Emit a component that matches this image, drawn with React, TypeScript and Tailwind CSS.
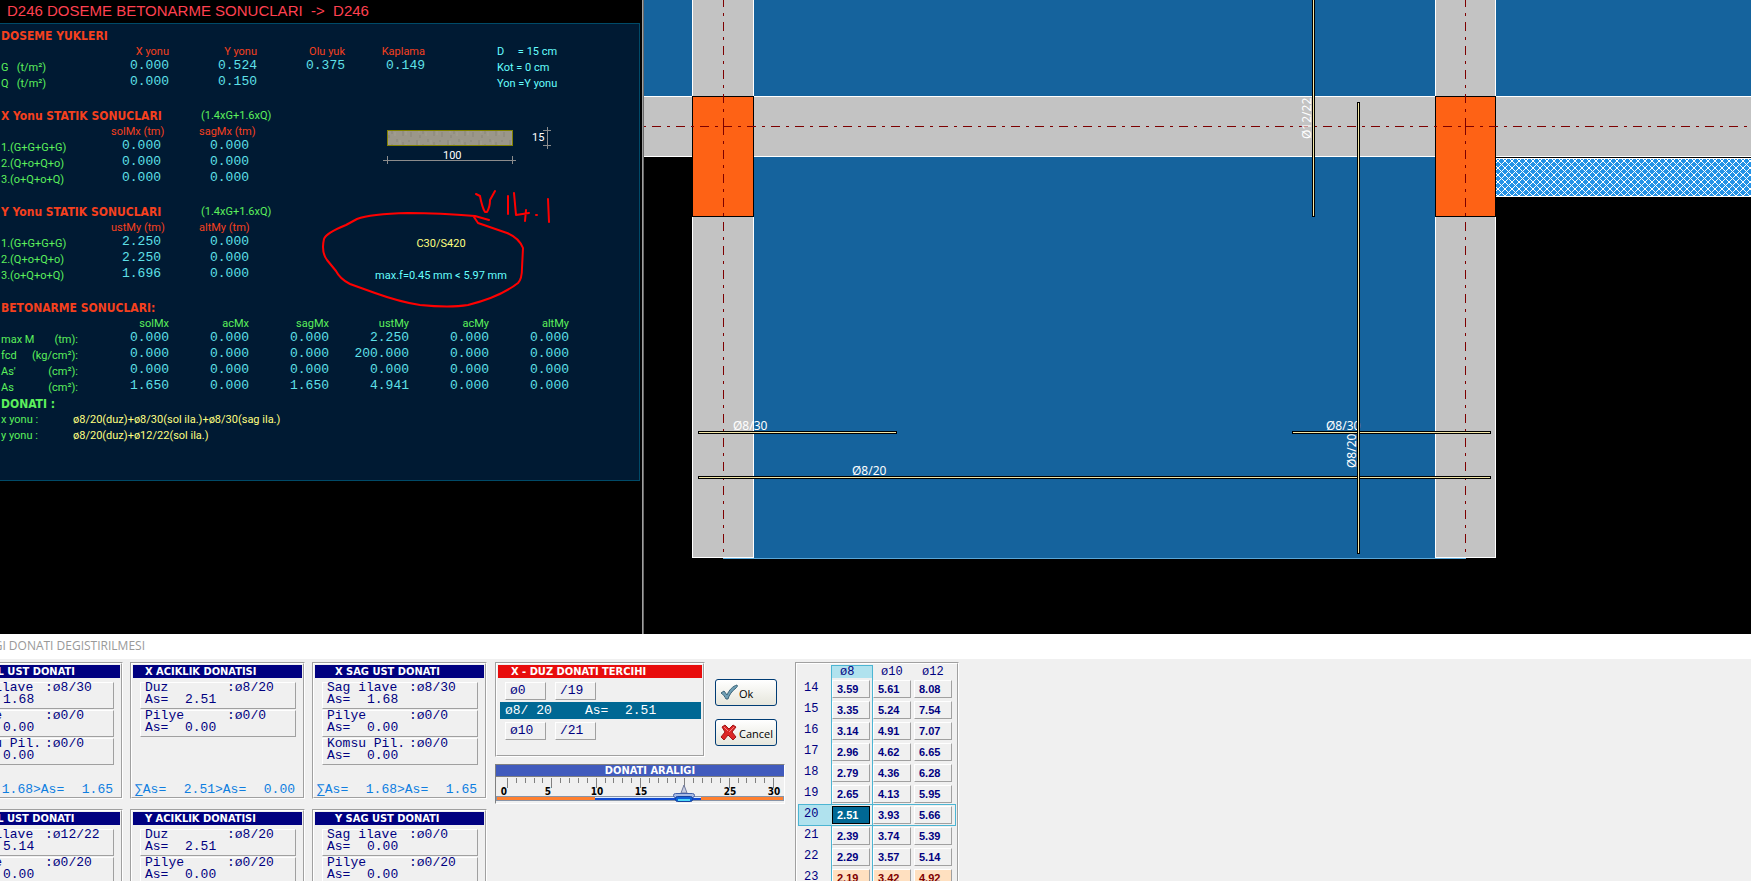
import { useState, type ReactNode } from 'react';

const LOADS = [
  { name: 'G', values: ['0.000', '0.524', '0.375', '0.149'] },
  { name: 'Q', values: ['0.000', '0.150'] },
];

const STATICS = [
  {
    title: 'X Yonu STATIK SONUCLARI',
    heads: ['solMx (tm)', 'sagMx (tm)'],
    values: [['0.000', '0.000'], ['0.000', '0.000'], ['0.000', '0.000']],
  },
  {
    title: 'Y Yonu STATIK SONUCLARI',
    heads: ['ustMy (tm)', 'altMy (tm)'],
    values: [['2.250', '0.000'], ['2.250', '0.000'], ['1.696', '0.000']],
  },
];

const CASES = ['1.(G+G+G+G)', '2.(Q+o+Q+o)', '3.(o+Q+o+Q)'];

const CONCRETE = [
  { name: 'max M', unit: '(tm):', values: ['0.000', '0.000', '0.000', '2.250', '0.000', '0.000'] },
  { name: 'fcd', unit: '(kg/cm²):', values: ['0.000', '0.000', '0.000', '200.000', '0.000', '0.000'] },
  { name: "As'", unit: '(cm²):', values: ['0.000', '0.000', '0.000', '0.000', '0.000', '0.000'] },
  { name: 'As', unit: '(cm²):', values: ['1.650', '0.000', '1.650', '4.941', '0.000', '0.000'] },
];

type RebarGroup = {
  title: string;
  indent: string;
  items: { name: string; bar: string; area: string }[];
  sum: string[];
};

const GROUPS: RebarGroup[][] = [
  [
    {
      title: 'X SOL UST DONATI',
      indent: 'pl-[20px]',
      items: [
        { name: 'Sol ilave', bar: 'ø8/30', area: '1.68' },
        { name: 'Pilye', bar: 'ø0/0', area: '0.00' },
        { name: 'Komsu Pil.', bar: 'ø0/0', area: '0.00' },
      ],
      sum: ['1.68', '1.65'],
    },
    {
      title: 'X ACIKLIK DONATISI',
      indent: 'pl-[12px]',
      items: [
        { name: 'Duz', bar: 'ø8/20', area: '2.51' },
        { name: 'Pilye', bar: 'ø0/0', area: '0.00' },
      ],
      sum: ['2.51', '0.00'],
    },
    {
      title: 'X SAG UST DONATI',
      indent: 'pl-[20px]',
      items: [
        { name: 'Sag ilave', bar: 'ø8/30', area: '1.68' },
        { name: 'Pilye', bar: 'ø0/0', area: '0.00' },
        { name: 'Komsu Pil.', bar: 'ø0/0', area: '0.00' },
      ],
      sum: ['1.68', '1.65'],
    },
  ],
  [
    {
      title: 'Y SOL UST DONATI',
      indent: 'pl-[20px]',
      items: [
        { name: 'Sol ilave', bar: 'ø12/22', area: '5.14' },
        { name: 'Pilye', bar: 'ø0/20', area: '0.00' },
      ],
      sum: [],
    },
    {
      title: 'Y ACIKLIK DONATISI',
      indent: 'pl-[12px]',
      items: [
        { name: 'Duz', bar: 'ø8/20', area: '2.51' },
        { name: 'Pilye', bar: 'ø0/20', area: '0.00' },
      ],
      sum: [],
    },
    {
      title: 'Y SAG UST DONATI',
      indent: 'pl-[20px]',
      items: [
        { name: 'Sag ilave', bar: 'ø0/0', area: '0.00' },
        { name: 'Pilye', bar: 'ø0/20', area: '0.00' },
      ],
      sum: [],
    },
  ],
];

const AREAS: [number, string[]][] = [
  [14, ['3.59', '5.61', '8.08']],
  [15, ['3.35', '5.24', '7.54']],
  [16, ['3.14', '4.91', '7.07']],
  [17, ['2.96', '4.62', '6.65']],
  [18, ['2.79', '4.36', '6.28']],
  [19, ['2.65', '4.13', '5.95']],
  [20, ['2.51', '3.93', '5.66']],
  [21, ['2.39', '3.74', '5.39']],
  [22, ['2.29', '3.57', '5.14']],
  [23, ['2.19', '3.42', '4.92']],
];

const MONO = "font-['Liberation_Mono',monospace]";
const HEADING = "font-['DejaVu_Sans_Condensed','DejaVu_Sans',sans-serif] font-bold";

function Heading({ children }: { children: ReactNode }) {
  return <h2 className={`${HEADING} pl-px text-[12px] text-[#f5401e]`}>{children}</h2>;
}

function Value({ children }: { children: ReactNode }) {
  return <td className={`${MONO} p-0 text-right align-top text-[13px] leading-[12px] text-[#5fe0e8]`}>{children}</td>;
}

function StaticTable({ title, heads, values }: (typeof STATICS)[number]) {
  return (
    <section>
      <div className="flex whitespace-nowrap">
        <div className="w-[201px] shrink-0"><Heading>{title}</Heading></div>
        <span className="text-[#5cf05c]">(1.4xG+1.6xQ)</span>
      </div>
      <table className="w-[249px] table-fixed border-collapse whitespace-nowrap text-left">
        <thead>
          <tr className="h-4 text-[#f5401e]">
            <th className="w-[73px] p-0" />
            {heads.map((h) => <th key={h} className="w-[88px] p-0 pl-[38px] font-normal">{h}</th>)}
          </tr>
        </thead>
        <tbody>
          {values.map((row, i) => (
            <tr key={CASES[i]} className="h-4">
              <th className="p-0 pl-px font-normal text-[#5cf05c]">{CASES[i]}</th>
              {row.map((v, j) => <Value key={j}>{v}</Value>)}
            </tr>
          ))}
        </tbody>
      </table>
    </section>
  );
}

function SlabFigure() {
  return (
    <svg width="240" height="60" className="block" aria-label="15 x 100">
      <defs>
        <pattern id="concrete" width="31" height="14" patternUnits="userSpaceOnUse">
          <rect width="31" height="14" fill="#9b978a" />
          <path d="M3 2v5M9 6v4M14 1v3M20 4v8M26 2v2M28 8v5M6 11v3" stroke="#8a8678" />
          <path d="M5 3v6M12 8v4M23 6v5M17 2v4" stroke="#a6a295" />
        </pattern>
      </defs>
      <rect x="66.500" y="6.500" width="125" height="15" fill="url(#concrete)" stroke="#808000" />
      <path d="M62 36.500h133M66.500 32v8M191.500 32v8M226.500 3v22M222 6.500h8M222 21.500h8" stroke="#8c8c8c" fill="none" />
      <g fill="#fff" className="font-['Roboto',sans-serif] text-[11px]">
        <text x="122" y="35">100</text>
        <text x="211" y="17">15</text>
      </g>
    </svg>
  );
}

function Report() {
  return (
    <div className="relative w-[642px] shrink-0 overflow-hidden font-['Roboto',sans-serif] text-[11px] leading-4">
      <h1 className="h-[23px] whitespace-pre pl-[7px] font-['Liberation_Sans',sans-serif] text-[15px] leading-[22px] text-[#ff4050]">
        {'D246 DOSEME BETONARME SONUCLARI  ->  D246'}
      </h1>
      <div className="mr-[2px] h-[458px] border border-l-0 border-[#004a68] bg-[#001a33] pt-1">
        <Heading>DOSEME YUKLERI</Heading>
        <div className="flex gap-[72px]">
          <table className="w-[425px] table-fixed border-collapse">
            <thead>
              <tr className="h-4 text-right text-[#f5401e]">
                <th className="w-[81px] p-0" />
                <th className="w-[88px] p-0 font-normal">X yonu</th>
                <th className="w-[88px] p-0 font-normal">Y yonu</th>
                <th className="w-[88px] p-0 font-normal">Olu yuk</th>
                <th className="w-[80px] p-0 font-normal">Kaplama</th>
              </tr>
            </thead>
            <tbody>
              {LOADS.map((l) => (
                <tr key={l.name} className="h-4">
                  <th className="whitespace-pre p-0 pl-px text-left font-normal text-[#5cf05c]">{`${l.name}   (t/m²)`}</th>
                  {l.values.map((v, i) => <Value key={i}>{v}</Value>)}
                </tr>
              ))}
            </tbody>
          </table>
          <div className="whitespace-pre text-[#6ff]">
            <p>{'D     = 15 cm'}</p>
            <p>Kot = 0 cm</p>
            <p>Yon =Y yonu</p>
          </div>
        </div>

        <div className="mt-4 flex gap-[72px]">
          <div className="flex w-[249px] flex-col gap-4">
            {STATICS.map((s) => <StaticTable key={s.title} {...s} />)}
          </div>
          <div className="w-[240px] pt-4 text-center">
            <SlabFigure />
            <p className="mt-[52px] text-[#ffff80]">C30/S420</p>
            <p className="mt-4 text-[#6ff]">max.f=0.45 mm &lt; 5.97 mm</p>
          </div>
        </div>

        <div className="mt-4">
          <Heading>BETONARME SONUCLARI:</Heading>
          <table className="w-[569px] table-fixed border-collapse text-[#5cf05c]">
            <thead>
              <tr className="h-4 text-right">
                <th className="w-[89px] p-0" />
                {['solMx', 'acMx', 'sagMx', 'ustMy', 'acMy', 'altMy'].map((h) => (
                  <th key={h} className="w-[80px] p-0 font-normal">{h}</th>
                ))}
              </tr>
            </thead>
            <tbody>
              {CONCRETE.map((r) => (
                <tr key={r.name} className="h-4">
                  <th className="p-0 font-normal">
                    <div className="flex w-[78px] justify-between pl-px"><span>{r.name}</span><span>{r.unit}</span></div>
                  </th>
                  {r.values.map((v, i) => <Value key={i}>{v}</Value>)}
                </tr>
              ))}
            </tbody>
          </table>
          <h2 className={`${HEADING} pl-px text-[12px] text-[#5cf05c]`}>DONATI :</h2>
          <dl className="grid grid-cols-[73px_1fr] text-[#5cf05c]">
            <dt className="pl-px">x yonu :</dt>
            <dd className="text-[#ffff80]">ø8/20(duz)+ø8/30(sol ila.)+ø8/30(sag ila.)</dd>
            <dt className="pl-px">y yonu :</dt>
            <dd className="text-[#ffff80]">ø8/20(duz)+ø12/22(sol ila.)</dd>
          </dl>
        </div>
      </div>

      {/* freehand pen markup */}
      <svg className="pointer-events-none absolute top-0 left-0 h-full w-full" fill="none" stroke="#f00" strokeWidth="2" strokeLinecap="round" strokeLinejoin="round">
        <path d="M489 220L475 216Q440 213 408 213Q370 214 357 219L346 225Q326 233 324 239Q321 252 327 260L336 271Q340 279 350 284L375 293Q400 302 420 305Q450 308 468 305Q500 297 518 283Q522 279 522 268L523 248Q519 238 507 233L478 223L474 217" />
        <path d="M476 194L480 196Q482 207 485 212H487Q490 207 490 200L495 191M508 196V214M514 193L516 215L529 213M526 210L525 221M536 215h1M548 199L549 222" />
      </svg>
    </div>
  );
}

function Bar({ x, y, length, vertical }: { x: number; y: number; length: number; vertical?: boolean }) {
  return vertical ? (
    <g>
      <rect x={x - 1} y={y} width="3" height={length} fill="#000" />
      <rect x={x} y={y + 1} width="1" height={length - 2} fill="#f3e7a8" />
    </g>
  ) : (
    <g>
      <rect x={x} y={y - 1} width={length} height="3" fill="#000" />
      <rect x={x + 1} y={y} width={length - 2} height="1" fill="#f3e7a8" />
    </g>
  );
}

function PlanView() {
  return (
    <svg className="h-full min-w-0 flex-1 border-l border-[#696969] bg-black" shapeRendering="crispEdges">
      <defs>
        <pattern id="hatch" width="7" height="7" patternUnits="userSpaceOnUse">
          <rect width="7" height="7" fill="#2492e6" />
          <path d="M-1 -1L8 8M8 -1L-1 8" stroke="#fff" />
        </pattern>
      </defs>
      <g transform="translate(-644 0)">
        {/* slabs */}
        <rect x="644" y="0" width="3000" height="96" fill="#15639d" />
        <rect x="723" y="156" width="743" height="403" fill="#5aa7d8" />
        <rect x="723" y="156" width="743" height="402" fill="#15639d" />
        <rect x="1496" y="158" width="3000" height="39" fill="#fff" />
        <rect x="1496" y="159" width="3000" height="37" fill="url(#hatch)" />

        {/* beams */}
        <g fill="#c3c3c3" stroke="#fff">
          <rect x="692.500" y="-2" width="61" height="559.500" />
          <rect x="1435.500" y="-2" width="60" height="559.500" />
          <rect x="640" y="96.500" width="3000" height="60" />
        </g>

        {/* columns */}
        <g fill="#fe6215" stroke="#000">
          <rect x="692.500" y="96.500" width="61" height="120" />
          <rect x="1435.500" y="96.500" width="60" height="120" />
        </g>

        {/* axes */}
        <g stroke="#7d0000" strokeDasharray="9 6 3 6">
          <path d="M628 126.500H723M723 126.500H1465M1465 126.500H3600" />
          <path d="M723.500 -2V126M723.500 126V557M1465.500 -2V126M1465.500 126V557" />
        </g>

        <g fill="#fff" className="font-['Noto_Sans',sans-serif] text-[12px]">
          <text x="733" y="430">Ø8/30</text>
          <text x="852" y="475">Ø8/20</text>
          <text x="1326" y="430">Ø8/30</text>
          <text transform="translate(1356 468) rotate(-90)">Ø8/20</text>
          <text transform="translate(1311 139) rotate(-90)">Ø12/22</text>
        </g>

        <Bar x={698} y={432} length={199} />
        <Bar x={1292} y={432} length={199} />
        <Bar x={698} y={477} length={793} />
        <Bar x={1313} y={-2} length={219} vertical />
        <Bar x={1358} y={102} length={452} vertical />
      </g>
    </svg>
  );
}

function Etched({ className, children }: { className: string; children: ReactNode }) {
  return (
    <div className={`${className} shrink-0 border border-t-[#a0a0a0] border-r-white border-b-white border-l-[#a0a0a0]`}>
      <div className="h-full border border-t-white border-r-[#a0a0a0] border-b-[#a0a0a0] border-l-white p-px">{children}</div>
    </div>
  );
}

const RAISED = 'border border-t-white border-r-[#a0a0a0] border-b-[#a0a0a0] border-l-white';

function RebarPanel({ title, indent, items, sum }: RebarGroup) {
  return (
    <Etched className="h-[137px] w-[175px]">
      <div className="flex h-full flex-col">
        <h3 className={`${HEADING} ${indent} h-[13px] bg-[#000080] text-[11px] leading-[13px] text-white`}>{title}</h3>
        <div className="flex flex-col gap-px px-[7px] pt-1">
          {items.map((item) => (
            <button key={item.name} type="button" className={`${RAISED} ${MONO} flex h-[27px] w-[156px] flex-col pl-1 text-left text-[13px] leading-[12px] text-[#000080]`}>
              <span className="-mt-px flex"><span className="w-[82px]">{item.name}</span>:{item.bar}</span>
              <span className="flex"><span className="w-[40px]">As=</span>{item.area}</span>
            </button>
          ))}
        </div>
        {sum.length > 0 && (
          <p className={`${MONO} mt-auto flex w-[162px] justify-between pl-[2px] text-[13px] leading-[12px] text-[#0f7ee0]`}>
            <span>∑As=</span>
            <span>{sum[0]}&gt;As=</span>
            <span>{sum[1]}</span>
          </p>
        )}
      </div>
    </Etched>
  );
}

function Choice({ children }: { children: ReactNode }) {
  return (
    <button type="button" className={`${RAISED} ${MONO} block h-[18px] w-[41px] pl-1 text-left text-[13px] leading-4 text-[#000080]`}>
      {children}
    </button>
  );
}

function SpacingSlider() {
  const [spacing, setSpacing] = useState(20);
  const at = (n: number) => 12 + Math.round((n * 266) / 30);

  return (
    <div className="w-[290px] border border-t-[#808080] border-r-white border-b-white border-l-[#808080]">
      <h3 className={`${HEADING} h-3 border-b border-[#808080] bg-[#415bbd] pl-5 text-center text-[11px] leading-[11px] text-white`}>DONATI ARALIGI</h3>
      <div className="relative">
        <svg width="288" height="26" className="block">
          <g stroke="#808080" shapeRendering="crispEdges">
            {Array.from({ length: 31 }, (_, n) => (
              <path key={n} d={`M${at(n) - 0.5} 1v${n % 5 === 0 ? 10 : 5}`} />
            ))}
          </g>
          <g className="font-['DejaVu_Sans_Condensed','DejaVu_Sans',sans-serif] text-[10px] font-bold" textAnchor="middle">
            {[0, 5, 10, 15, 25, 30].map((n) => (
              <text key={n} x={at(n) - (n < 10 ? 4 : 0)} y="18">{n}</text>
            ))}
          </g>
          <rect x="0" y="19" width="288" height="5" fill="#8794a8" />
          <rect x="1" y="20" width="98" height="3" fill="#ff8030" />
          <rect x="205" y="20" width="82" height="3" fill="#ff8030" />
          <rect x="99" y="20" width="106" height="1" fill="#dceaff" />
          <rect x="99" y="21" width="106" height="2" fill="#1048d0" />
          <g transform={`translate(${at(spacing) - 1} 0)`}>
            <path d="M0 8L-3 16H3Z" fill="#c9cde0" stroke="#707a9c" />
            <rect x="-10.500" y="16.500" width="21" height="4" rx="2" fill="#a9bbe4" stroke="#4260a8" />
            <rect x="-8.500" y="19.500" width="17" height="5" rx="2" fill="#1060d8" stroke="#17429c" />
            <rect x="-6" y="22" width="12" height="2" fill="#4fd8f8" />
          </g>
        </svg>
        <input
          type="range"
          min={0}
          max={30}
          value={spacing}
          aria-label="DONATI ARALIGI"
          onChange={(e) => setSpacing(Number(e.target.value))}
          className="absolute inset-0 w-full cursor-pointer opacity-0"
        />
      </div>
    </div>
  );
}

const DIALOG_BUTTON =
  "flex h-[27px] w-[62px] items-center gap-px rounded-[3px] border border-[#003c74] bg-linear-to-b from-white to-[#e6e6dc] pl-1 font-['Open_Sans',sans-serif] text-[11px] text-black";

function AreaTable() {
  return (
    <Etched className="h-[260px] w-[164px]">
      <div className="relative h-full">
        <div className="absolute top-0 left-[33px] h-full w-[42px] border border-[#4cb5d3]">
          <div className="h-3 bg-[#b0e2ee]" />
        </div>
        <div className="absolute top-[139px] left-0 h-[22px] w-[158px] border border-[#4cb5d3]">
          <div className="h-full w-[33px] bg-[#b0e2ee]" />
        </div>
        <table className="relative table-fixed border-separate border-spacing-[3px] text-[#000080]">
          <thead>
            <tr className={`${MONO} text-left text-[12px] leading-[9px]`}>
              <th className="w-[28px] p-0" />
              {['ø8', 'ø10', 'ø12'].map((d) => <th key={d} className="w-[38px] p-0 pl-2 font-normal">{d}</th>)}
            </tr>
          </thead>
          <tbody>
            {AREAS.map(([step, areas]) => (
              <tr key={step}>
                <th className={`${MONO} p-0 pl-[3px] text-left align-top text-[12px] leading-4 font-normal`}>{step}</th>
                {areas.map((a, i) => (
                  <td key={i} className="p-0">
                    <button
                      type="button"
                      className={`block h-[18px] w-full border pl-1 text-left font-['Liberation_Sans',sans-serif] text-[11px] leading-4 font-bold ${
                        step === 20 && i === 0
                          ? 'border-black bg-[#006894] text-white'
                          : step === 23
                            ? 'border-t-white border-r-[#a0a0a0] border-b-[#a0a0a0] border-l-white bg-[#ffe0c0] text-[#800000]'
                            : 'border-t-white border-r-[#a0a0a0] border-b-[#a0a0a0] border-l-white bg-[#f0f0f0]'
                      }`}
                    >
                      {a}
                    </button>
                  </td>
                ))}
              </tr>
            ))}
          </tbody>
        </table>
      </div>
    </Etched>
  );
}

export default function App() {
  return (
    <div className="h-screen overflow-hidden bg-[#f0f0f0]">
      <div className="flex h-[634px] bg-black">
        <Report />
        <div className="w-px shrink-0 bg-[#a0a0a0]" />
        <PlanView />
      </div>

      <div className="bg-white">
        <p className="flex h-[25px] w-[145px] justify-end overflow-hidden whitespace-nowrap font-['Open_Sans',sans-serif] text-[12px] leading-[23px] text-[#999]">
          AGI DONATI DEGISTIRILMESI
        </p>
      </div>

      <div className="flex pt-[3px]">
        <div className="-ml-[52px] flex shrink-0 flex-col gap-[10px]">
          {GROUPS.map((row, i) => (
            <div key={i} className="flex gap-[7px]">
              {row.map((g) => <RebarPanel key={g.title} {...g} />)}
            </div>
          ))}
        </div>

        <div className="ml-[8px] shrink-0">
          <div className="flex gap-[10px]">
            <Etched className="h-[95px] w-[210px]">
              <h3 className={`${HEADING} h-[13px] bg-[#e80c0c] pl-[13px] text-[11px] leading-[13px] text-white`}>X - DUZ DONATI TERCIHI</h3>
              <div className="mt-1 flex gap-[9px] pl-[7px]"><Choice>ø0</Choice><Choice>/19</Choice></div>
              <button type="button" className={`${MONO} m-[2px] flex h-[17px] w-[201px] bg-[#006894] pl-[5px] text-left text-[13px] leading-[17px] text-white`}>
                <span className="w-[80px]">ø8/ 20</span>
                <span className="w-[40px]">As=</span>
                <span>2.51</span>
              </button>
              <div className="mt-[3px] flex gap-[9px] pl-[7px]"><Choice>ø10</Choice><Choice>/21</Choice></div>
            </Etched>
            <div className="flex flex-col gap-[13px] pt-[17px]">
              <button type="button" className={DIALOG_BUTTON}>
                <svg width="18" height="17" viewBox="0 0 18 17">
                  <path d="M1 9L4 7L7 11C9 6 13 2 17 1C18 2 17 3 16 4C12 7 9 11 8 15H6C5 13 3 10 1 9Z" fill="#6f9fb5" stroke="#3c6478" />
                </svg>
                <span className="pt-1">Ok</span>
              </button>
              <button type="button" className={DIALOG_BUTTON}>
                <svg width="18" height="17" viewBox="0 0 18 17">
                  <path d="M2 3L5 1L9 5L13 1L16 3L12 8L16 13L13 16L8 11L4 16L1 13L5 8Z" fill="#dc2626" stroke="#a01616" strokeLinejoin="round" />
                  <path d="M4 3L8 7M14 3L9 8" stroke="#f28080" />
                </svg>
                <span className="pt-1">Cancel</span>
              </button>
            </div>
          </div>
          <div className="mt-[7px]">
            <SpacingSlider />
          </div>
        </div>

        <div className="ml-[10px]">
          <AreaTable />
        </div>
      </div>
    </div>
  );
}
